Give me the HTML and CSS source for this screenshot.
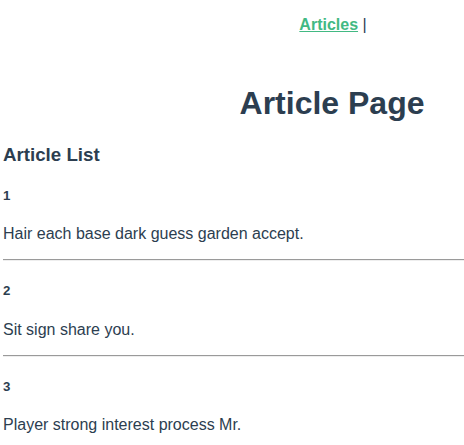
FILE: index.html
```html
<!DOCTYPE html>
<html lang="en">
<head>
<meta charset="utf-8">
<title>Article Page</title>
<link rel="stylesheet" href="styles.css">
</head>
<body>
<div class="app">
  <nav class="nav"><a class="nav-link" href="#">Articles</a> |</nav>
  <h1 class="title">Article Page</h1>
  <section class="list">
    <h3 class="list-title">Article List</h3>
    <div class="article">
      <h5 class="article-id">1</h5>
      <p class="article-text">Hair each base dark guess garden accept.</p>
      <hr class="divider">
    </div>
    <div class="article">
      <h5 class="article-id">2</h5>
      <p class="article-text">Sit sign share you.</p>
      <hr class="divider">
    </div>
    <div class="article">
      <h5 class="article-id">3</h5>
      <p class="article-text">Player strong interest process Mr.</p>
      <hr class="divider">
    </div>
  </section>
</div>
</body>
</html>
```

FILE: styles.css
```css
body {
  margin: 0;
  background: #fff;
}
.app {
  font-family: "Liberation Sans", Arial, Helvetica, sans-serif;
  color: #2c3e50;
  padding-left: 3px;
  -webkit-font-smoothing: antialiased;
}
.nav {
  padding: 16px 0 30px 199px;
  text-align: center;
}
.nav-link {
  font-weight: bold;
  color: #42b983;
}
.title {
  text-align: center;
  font-size: 32px;
  margin: 21.44px 0;
  padding-left: 197px;
}
.list {
  text-align: left;
}
.list-title {
  font-size: 18.72px;
  margin: 18.72px 0;
}
.article-id {
  font-size: 13.28px;
  margin: 22.18px 0;
}
.article-text {
  font-size: 16px;
  margin: 16px 0;
}
.divider {
  margin: 8px 0;
  height: 0;
  border: none;
  border-top: 1px solid #9a9a9a;
  border-bottom: 1px solid #eeeeee;
}
```
